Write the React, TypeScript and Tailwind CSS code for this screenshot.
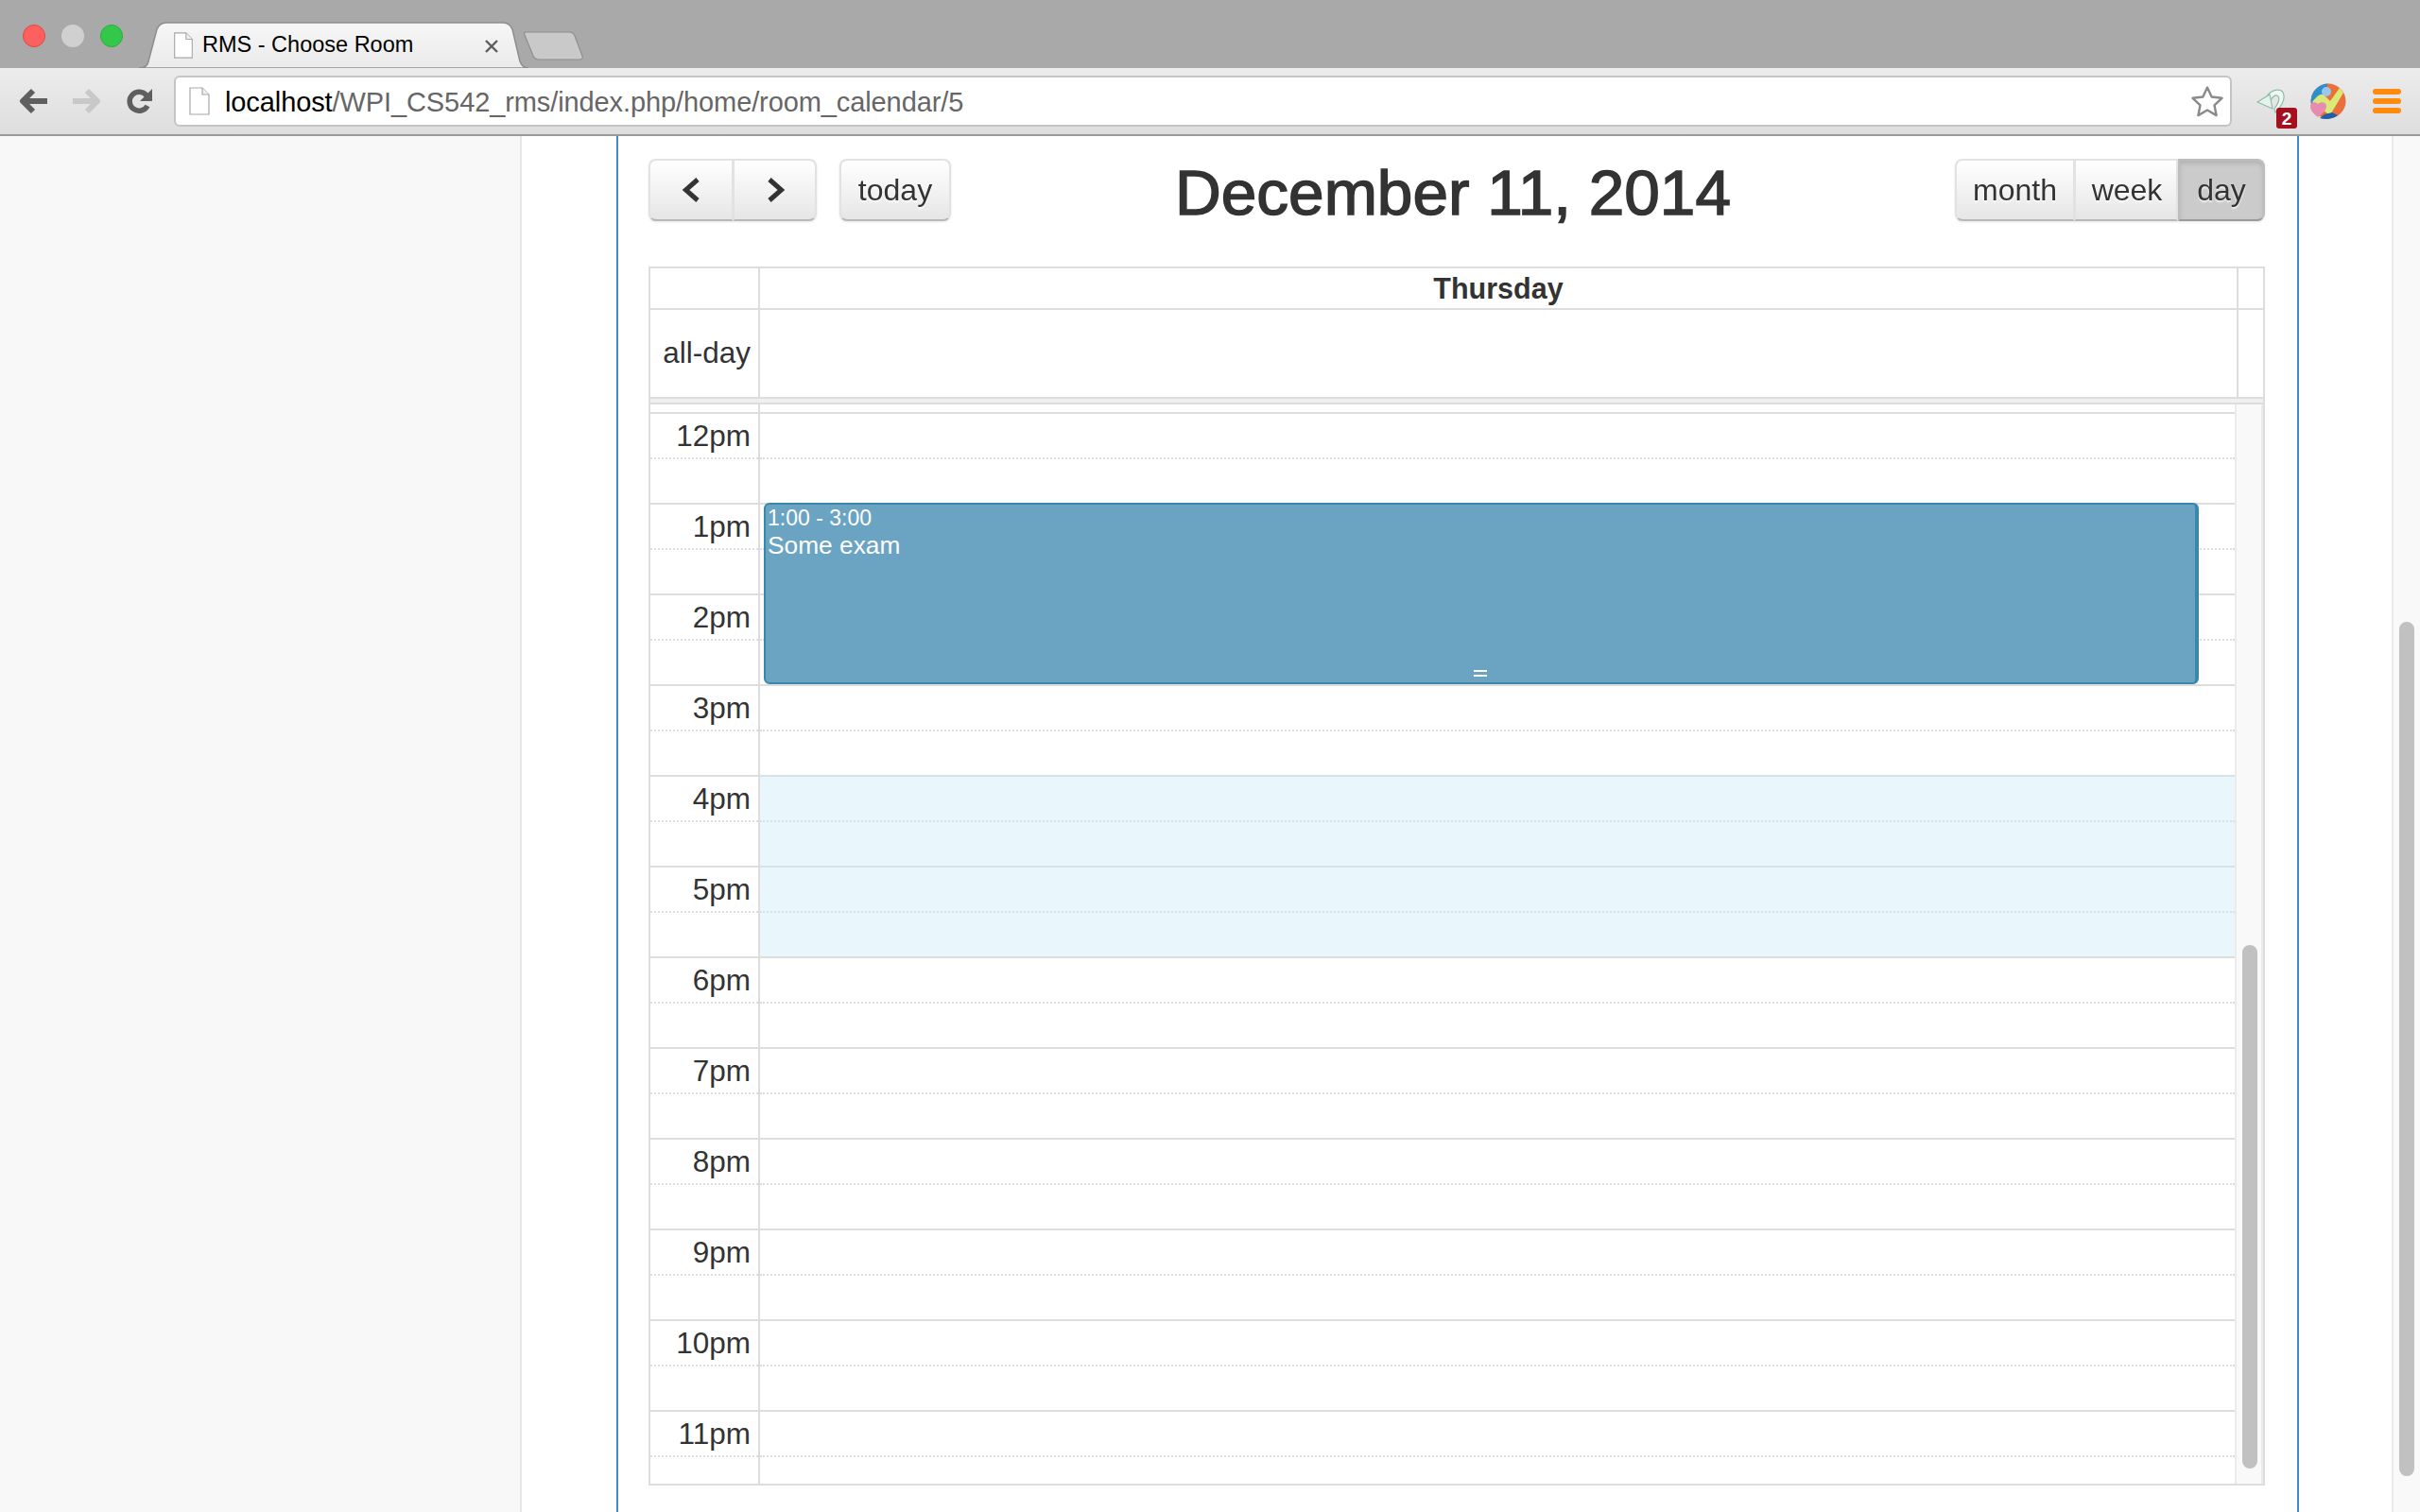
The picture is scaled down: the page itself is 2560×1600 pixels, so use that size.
const hours = ["12pm", "1pm", "2pm", "3pm", "4pm", "5pm", "6pm", "7pm", "8pm", "9pm", "10pm", "11pm"];

function PageIcon({ className }: { className: string }) {
  return (
    <svg viewBox="0 0 22 30" className={className}>
      <path d="M1 1h13l7 7v21H1z" fill="#fff" stroke="#a8a8a8" strokeWidth="1.2" />
      <path d="M14 1v7h7" fill="#f0f0f0" stroke="#a8a8a8" strokeWidth="1.2" />
    </svg>
  );
}

function TabStrip() {
  return (
    <div className="flex h-[72px] items-start bg-[#a9a9a9]">
      {/* Traffic lights */}
      <div className="mt-[26px] ml-[24px] flex gap-[17px]">
        <div className="h-[24px] w-[24px] rounded-full border border-[#e2463f] bg-[#fc615d]" />
        <div className="h-[24px] w-[24px] rounded-full bg-[#d0d0d0]" />
        <div className="h-[24px] w-[24px] rounded-full border border-[#2cac3a] bg-[#34c84a]" />
      </div>

      {/* Active tab */}
      <div className="relative mt-[23px] ml-[17px] flex h-[49px] w-[414px] items-center pl-[36px]">
        <svg viewBox="0 0 414 49" className="absolute inset-0 h-[49px] w-[414px]">
          <defs>
            <linearGradient id="tabFill" x1="0" y1="0" x2="0" y2="1">
              <stop offset="0" stopColor="#f6f6f6" />
              <stop offset="1" stopColor="#ebebeb" />
            </linearGradient>
          </defs>
          <path
            d="M0 49c6 0 9-2 10-7L19 8c2-5 5-7 10-7h356c5 0 8 2 10 7l8 34c2 5 5 7 9 7z"
            fill="url(#tabFill)"
            stroke="#8e8e8e"
            strokeWidth="1.5"
          />
        </svg>
        <PageIcon className="relative h-[28px] w-[22px]" />
        <span className="relative ml-[9px] pt-[1px] text-[23.5px] leading-none text-black">RMS - Choose Room</span>
        <svg viewBox="0 0 14 14" className="absolute top-[19px] left-[366px] h-[14px] w-[14px]">
          <path d="M1 1l12 12M13 1L1 13" stroke="#5c5c5c" strokeWidth="2.4" />
        </svg>
      </div>

      {/* New tab button */}
      <svg viewBox="0 0 64 32" className="mt-[32px] ml-[-7px] h-[32px] w-[64px]">
        <path
          d="M2 2h46c3 0 5 1 6 4l8 21c1 3-1 4-3 4H16c-3 0-5-2-6-4L1 5C0 3 1 2 2 2z"
          fill="#c9c9c9"
          stroke="#8e8e8e"
          strokeWidth="1.2"
        />
      </svg>
    </div>
  );
}

function Toolbar() {
  return (
    <div className="flex h-[72px] items-center border-b-2 border-[#9a9a9a] bg-gradient-to-b from-[#ececec] to-[#dedede] pl-[20px]">
      <svg viewBox="0 0 32 28" className="h-[28px] w-[32px]">
        <path d="M30 14H5M15 3L4 14l11 11" fill="none" stroke="#5f5f5f" strokeWidth="6" strokeLinejoin="round" />
      </svg>
      <svg viewBox="0 0 32 28" className="ml-[23px] h-[28px] w-[32px]">
        <path d="M2 14h25M17 3l11 11-11 11" fill="none" stroke="#c8c8c8" strokeWidth="6" strokeLinejoin="round" />
      </svg>
      <svg viewBox="0 0 28 28" className="ml-[27px] h-[28px] w-[28px]">
        <path d="M22 19a10 10 0 1 1-1-11" fill="none" stroke="#5f5f5f" strokeWidth="5.5" />
        <path d="M27 1v13H14z" fill="#5f5f5f" />
      </svg>
      <div className="ml-[22px] flex h-[54px] w-[2177px] items-center rounded-[6px] border-2 border-[#c4c4c4] bg-white pl-[14px]">
        <PageIcon className="h-[30px] w-[22px]" />
        <span className="ml-[16px] pt-[2px] text-[29px] leading-none tracking-[-0.1px] text-[#666]">
          <span className="text-black">localhost</span>/WPI_CS542_rms/index.php/home/room_calendar/5
        </span>
        <svg viewBox="0 0 36 34" className="mr-[6px] ml-auto h-[34px] w-[36px]">
          <path
            d="M18 2.5l4.6 10 10.9 1.3-8 7.5 2.1 10.8L18 26.5l-9.6 5.6 2.1-10.8-8-7.5 10.9-1.3z"
            fill="#fff"
            stroke="#8a8a8a"
            strokeWidth="2.4"
            strokeLinejoin="round"
          />
        </svg>
      </div>

      {/* Extensions */}
      <div className="relative ml-[26px] h-[44px] w-[44px]">
        <svg viewBox="0 0 30 28" className="absolute top-[8px] left-0 h-[28px] w-[30px]">
          <path d="M11 9C16 1 28-1 29 8c1 7-5 14-9 18l-1-4c3-4 6-10 4-13-2-3-6 0-8 4z" fill="#eef7f2" stroke="#8cbca6" strokeWidth="1.2" />
          <path d="M1 15L14 7l3 15z" fill="#e6f3ec" stroke="#8cbca6" strokeWidth="1.2" strokeLinejoin="round" />
        </svg>
        <div className="absolute top-[29px] left-[21px] flex h-[22px] w-[22px] items-center justify-center rounded-[3px] bg-[#a5101f] text-[19px] leading-none font-bold text-white">
          2
        </div>
      </div>
      <svg viewBox="0 0 38 38" className="ml-[13px] h-[38px] w-[38px]">
        <circle cx="19" cy="19" r="18.5" fill="#e9703a" />
        <path d="M19 .5A18.5 18.5 0 0 0 2 26l14-6 2-19z" fill="#2c8fd0" />
        <path d="M2 20c6-8 10-10 13-7l6 6 10-14 4 5-13 22-4 0z" fill="#dce878" />
        <path d="M10 37c6 2 14 1 19-3l-6-3-8 2z" fill="#1f5fa8" />
        <circle cx="17" cy="9" r="5" fill="#9cc6ee" />
        <path d="M8 36C3 32 0 29 0 24c0-4 5-5 8-2 3-3 9-2 9 2 0 5-4 8-9 12z" fill="#e88bb0" />
      </svg>
      <div className="ml-[28px] flex flex-col gap-[4px]">
        <div className="h-[6px] w-[30px] rounded-[3px] bg-[#ff8a0d]" />
        <div className="h-[6px] w-[30px] rounded-[3px] bg-[#ff8a0d]" />
        <div className="h-[6px] w-[30px] rounded-[3px] bg-[#ff8a0d]" />
      </div>
    </div>
  );
}

function Chevron({ left }: { left?: boolean }) {
  return (
    <svg viewBox="0 0 20 26" className="h-[26px] w-[20px]">
      <path
        d={left ? "M17 2L4.5 13 17 24" : "M3 2l12.5 11L3 24"}
        fill="none"
        stroke="#333"
        strokeWidth="5"
      />
    </svg>
  );
}

const btn =
  "flex h-full items-center justify-center border-2 border-b-[#b8b8b8] border-[#e2e2e2] bg-gradient-to-b from-white to-[#e6e6e6] text-[32px] text-[#333] [text-shadow:0_2px_2px_rgba(255,255,255,0.75)]";

function CalendarHeader() {
  return (
    <div className="flex h-[66px] items-center justify-between">
      <div className="flex h-full">
        <div className="flex h-full drop-shadow-[0_1px_1px_rgba(0,0,0,0.1)]">
          <button className={`${btn} w-[90px] rounded-l-[8px]`}>
            <Chevron left />
          </button>
          <button className={`${btn} ml-[-1px] w-[89px] rounded-r-[8px] pl-[2px]`}>
            <Chevron />
          </button>
        </div>
        <button className={`${btn} ml-[24px] w-[118px] rounded-[8px] drop-shadow-[0_1px_1px_rgba(0,0,0,0.1)]`}>
          today
        </button>
      </div>

      <h2 className="mt-[6px] text-[67.5px] leading-none text-[#333] [-webkit-text-stroke:1.5px_#333]">December 11, 2014</h2>

      <div className="flex h-full drop-shadow-[0_1px_1px_rgba(0,0,0,0.1)]">
        <button className={`${btn} w-[127px] rounded-l-[8px]`}>month</button>
        <button className={`${btn} ml-[-1px] w-[110px] pl-[2px]`}>week</button>
        <button className="flex h-full w-[92px] items-center justify-center rounded-r-[8px] border-2 border-[#bdbdbd] border-b-[#9a9a9a] bg-[#cbcbcb] text-[32px] text-[#333] shadow-[inset_0_3px_5px_rgba(0,0,0,0.12)] [text-shadow:0_2px_2px_rgba(255,255,255,0.75)]">
          day
        </button>
      </div>
    </div>
  );
}

function HourRow({ label, highlight, last }: { label: string; highlight?: boolean; last?: boolean }) {
  const lower = last ? "h-[28px]" : "h-[46px]";
  const lines = highlight ? "border-[#d3e3ea]" : "border-[#dddddd]";
  return (
    <div className="flex">
      <div className="w-[116px] border-r-2 border-[#dddddd]">
        <div className="h-[50px] border-t-2 border-b-2 border-[#dddddd] pt-[5px] pr-[8px] text-right text-[31.5px] leading-[36px] text-[#333] [border-bottom-style:dotted]">
          {label}
        </div>
        <div className={lower} />
      </div>
      <div className={`flex-1 ${highlight ? "bg-[#e9f6fc]" : "bg-white"}`}>
        <div className={`h-[50px] border-t-2 border-b-2 ${lines} [border-bottom-style:dotted]`} />
        <div className={lower} />
      </div>
    </div>
  );
}

function Calendar() {
  return (
    <div className="mt-[48px] border-2 border-[#dddddd]">
      {/* Day heading */}
      <div className="flex h-[44px] border-b-2 border-[#dddddd]">
        <div className="w-[116px] border-r-2 border-[#dddddd]" />
        <div className="flex flex-1 items-center justify-center border-r-2 border-[#dddddd] pt-[2px] text-[30.5px] font-bold text-[#333]">
          Thursday
        </div>
        <div className="w-[26px]" />
      </div>

      {/* All-day */}
      <div className="flex h-[94px] border-b-2 border-[#dddddd]">
        <div className="flex w-[116px] items-center justify-end border-r-2 border-[#dddddd] pr-[8px] text-[31.5px] text-[#333]">
          all-day
        </div>
        <div className="flex-1 border-r-2 border-[#dddddd]" />
        <div className="w-[26px]" />
      </div>
      <div className="h-[6px] border-b-2 border-[#dddddd] bg-[#f0f0f0]" />

      {/* Slots */}
      <div className="flex h-[1142px] overflow-hidden">
        <div className="relative flex-1">
          <div className="flex h-[8px]">
            <div className="w-[116px] border-r-2 border-[#dddddd]" />
          </div>
          {hours.map((h, i) => (
            <HourRow key={h} label={h} highlight={h === "4pm" || h === "5pm"} last={i === hours.length - 1} />
          ))}

          {/* Event */}
          <div className="absolute top-[104px] left-[120px] flex h-[192px] w-[1518px] flex-col rounded-[6px] border-2 border-r-4 border-[#3a87ad] bg-[#6ba4c2] pl-[2px] text-white">
            <div className="text-[23px] leading-[29px]">1:00 - 3:00</div>
            <div className="text-[26.3px] leading-[29px]">Some exam</div>
            <div className="mt-auto mb-[6px] ml-[747px] h-[7px] w-[14px] border-y-2 border-white" />
          </div>
        </div>

        {/* Inner scrollbar */}
        <div className="w-[30px] border-x-2 border-[#ebebeb] bg-[#f9f9f9] px-[6px]">
          <div className="mt-[572px] h-[554px] w-[16px] rounded-full bg-[#c1c1c1]" />
        </div>
      </div>
    </div>
  );
}

export default function App() {
  return (
    <div className="flex h-[1600px] w-[2560px] flex-col overflow-hidden bg-white font-['Liberation_Sans',Arial,sans-serif]">
      <TabStrip />
      <Toolbar />
      <div className="flex flex-1">
        <div className="w-[552px] border-r-2 border-[#e7e7e7] bg-[#f8f8f8]" />
        <div className="ml-[100px] h-full w-[1780px] border-x-2 border-[#428bca] pt-[24px] pr-[34px] pl-[32px]">
          <CalendarHeader />
          <Calendar />
        </div>
        <div className="ml-[98px] w-[30px] border-l-2 border-[#ebebeb] bg-[#f9f9f9] pl-[6px]">
          <div className="mt-[514px] h-[904px] w-[16px] rounded-full bg-[#c1c1c1]" />
        </div>
      </div>
    </div>
  );
}
